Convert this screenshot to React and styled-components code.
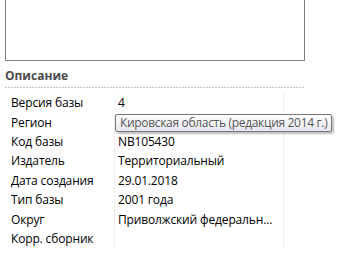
import { Fragment } from "react";
import styled, { createGlobalStyle } from "styled-components";

const GlobalStyle = createGlobalStyle`
    body {
        margin: 0;
        background: #ffffff;
        font-family: "Open Sans", "Noto Sans", sans-serif;
        font-size: 12px;
        letter-spacing: -0.15px;
        color: #000;
    }
`;

const Page = styled.div`
    width: 337px;
    height: 253px;
    overflow: hidden;
    position: relative;
`;

const PreviewBox = styled.div`
    margin-left: 5px;
    width: 298px;
    height: 60px;
    border: 1px solid #7f7f7f;
    border-top: none;
`;

const Heading = styled.div`
    margin: 7px 0 0 5px;
    font-weight: bold;
    font-size: 12px;
    letter-spacing: 0;
    color: #4b4b4b;
    line-height: 16px;
`;

const Divider = styled.div`
    margin: 3px 0 0 5px;
    width: 299px;
    height: 1px;
    background: repeating-linear-gradient(
        to right,
        #c4c4c4 0 2px,
        transparent 2px 3px
    );
`;

const Table = styled.div`
    margin-top: 5px;
    display: grid;
    grid-template-columns: 114px 170px;
    grid-auto-rows: 19.43px;
`;

const Cell = styled.div`
    display: flex;
    align-items: center;
    padding-left: ${(p) => (p.$value ? "3px" : "11px")};
    border-left: ${(p) => (p.$value ? "1px solid #f0f0f0" : "none")};
    border-right: ${(p) => (p.$value ? "1px solid #f0f0f0" : "none")};
    white-space: nowrap;
    overflow: hidden;
`;

const Tooltip = styled.div`
    position: absolute;
    left: 115px;
    top: 114px;
    height: 16px;
    border: 1px solid #767676;
    border-radius: 2px;
    background: linear-gradient(#ffffff, #e6e7ef);
    box-shadow: 2px 2px 2px rgba(0, 0, 0, 0.25);
    color: #575757;
    padding: 0 4px;
    line-height: 16px;
    letter-spacing: -0.32px;
    white-space: nowrap;
`;

const rows = [
    ["Версия базы", "4"],
    ["Регион", ""],
    ["Код базы", "NB105430"],
    ["Издатель", "Территориальный"],
    ["Дата создания", "29.01.2018"],
    ["Тип базы", "2001 года"],
    ["Округ", "Приволжский федеральн..."],
    ["Корр. сборник", ""],
];

export default function App() {
    return (
        <Page>
            <GlobalStyle />
            <PreviewBox />
            <Heading>Описание</Heading>
            <Divider />
            <Table>
                {rows.map(([label, value]) => (
                    <Fragment key={label}>
                        <Cell>{label}</Cell>
                        <Cell $value>{value}</Cell>
                    </Fragment>
                ))}
            </Table>
            <Tooltip>Кировская область (редакция 2014 г.)</Tooltip>
        </Page>
    );
}
